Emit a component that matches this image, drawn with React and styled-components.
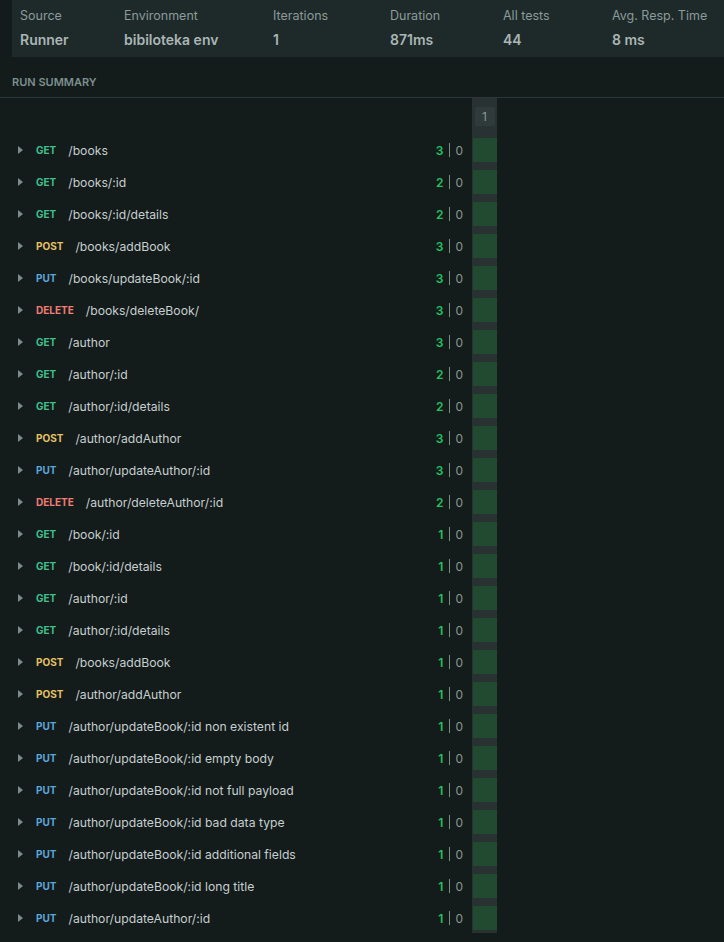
import React from "react";
import styled, { createGlobalStyle } from "styled-components";

const Global = createGlobalStyle`
  html, body { margin: 0; padding: 0; background: #131b1b; }
  body { font-family: Inter, "Noto Sans", sans-serif; -webkit-font-smoothing: antialiased; }
`;

const Page = styled.div`
  width: 724px;
  height: 942px;
  overflow: hidden;
  background: #131b1b;
`;

const Stats = styled.div`
  margin-left: 12px;
  height: 57px;
  background: #1e2929;
  display: grid;
  grid-template-columns: 104px 149px 117px 113px 109px 1fr;
  padding-left: 8px;
  box-sizing: border-box;
`;

const Stat = styled.div`
  display: flex;
  flex-direction: column;
  padding-top: 8px;
`;

const StatLabel = styled.div`
  font-size: 12.5px;
  color: #8b9b9a;
  line-height: 16px;
`;

const StatValue = styled.div`
  font-size: 14px;
  font-weight: 600;
  color: #aab6b5;
  line-height: 18px;
  margin-top: 7px;
`;

const SectionTitle = styled.div`
  padding: 18px 12px 0;
  height: 41px;
  box-sizing: border-box;
  font-size: 11px;
  font-weight: 600;
  color: #7d8f8e;
  border-bottom: 1px solid #2a3737;
  line-height: 14px;
`;

const Summary = styled.div`
  display: flex;
  align-items: flex-start;
`;

const List = styled.div`
  width: 472px;
  padding-top: 36px;
`;

const Row = styled.div`
  height: 32px;
  display: flex;
  align-items: center;
  padding-left: 18px;
  padding-right: 9px;
`;

const Caret = styled.span`
  width: 0;
  height: 0;
  border-top: 4px solid transparent;
  border-bottom: 4px solid transparent;
  border-left: 5px solid #7c8b8b;
  margin-right: 13px;
`;

const methodColors = {
  GET: "#3fc08e",
  POST: "#e6c264",
  PUT: "#5ca7dd",
  DELETE: "#f07d76",
};

const Method = styled.span`
  font-size: 10px;
  font-weight: 700;
  color: ${(p) => methodColors[p.$m]};
  margin-right: 12px;
`;

const Path = styled.span`
  font-size: 12.2px;
  color: #c6cfcf;
  flex: 1;
  white-space: nowrap;
`;

const Counts = styled.span`
  display: flex;
  align-items: center;
  font-size: 12px;
`;

const Pass = styled.span`
  color: #22c35f;
  font-weight: 600;
`;

const Sep = styled.span`
  width: 1px;
  height: 14px;
  background: #7d8a8a;
  margin: 0 5px 0 6px;
`;

const Fail = styled.span`
  color: #8c9999;
`;

const Column = styled.div`
  width: 25px;
  background: #293232;
  padding-bottom: 3px;
  display: flex;
  flex-direction: column;
  gap: 8px;
`;

const ColHead = styled.div`
  height: 32px;
  display: flex;
  justify-content: center;
  padding-top: 9px;
  box-sizing: border-box;
`;

const ColBadge = styled.div`
  width: 20px;
  height: 19px;
  border-radius: 2px;
  background: #2f3a3a;
  color: #8a9898;
  font-size: 12px;
  display: flex;
  align-items: center;
  justify-content: center;
`;

const Cell = styled.div`
  height: 24px;
  margin-left: 1px;
  background: #214a30;
`;

const stats = [
  ["Source", "Runner"],
  ["Environment", "bibiloteka env"],
  ["Iterations", "1"],
  ["Duration", "871ms"],
  ["All tests", "44"],
  ["Avg. Resp. Time", "8 ms"],
];

const rows = [
  ["GET", "/books", 3],
  ["GET", "/books/:id", 2],
  ["GET", "/books/:id/details", 2],
  ["POST", "/books/addBook", 3],
  ["PUT", "/books/updateBook/:id", 3],
  ["DELETE", "/books/deleteBook/", 3],
  ["GET", "/author", 3],
  ["GET", "/author/:id", 2],
  ["GET", "/author/:id/details", 2],
  ["POST", "/author/addAuthor", 3],
  ["PUT", "/author/updateAuthor/:id", 3],
  ["DELETE", "/author/deleteAuthor/:id", 2],
  ["GET", "/book/:id", 1],
  ["GET", "/book/:id/details", 1],
  ["GET", "/author/:id", 1],
  ["GET", "/author/:id/details", 1],
  ["POST", "/books/addBook", 1],
  ["POST", "/author/addAuthor", 1],
  ["PUT", "/author/updateBook/:id non existent id", 1],
  ["PUT", "/author/updateBook/:id empty body", 1],
  ["PUT", "/author/updateBook/:id not full payload", 1],
  ["PUT", "/author/updateBook/:id bad data type", 1],
  ["PUT", "/author/updateBook/:id additional fields", 1],
  ["PUT", "/author/updateBook/:id long title", 1],
  ["PUT", "/author/updateAuthor/:id", 1],
];

export default function App() {
  return (
    <Page>
      <Global />
      <Stats>
        {stats.map(([l, v]) => (
          <Stat key={l}>
            <StatLabel>{l}</StatLabel>
            <StatValue>{v}</StatValue>
          </Stat>
        ))}
      </Stats>
      <SectionTitle>RUN SUMMARY</SectionTitle>
      <Summary>
        <List>
          {rows.map(([m, p, n], i) => (
            <Row key={i}>
              <Caret />
              <Method $m={m}>{m}</Method>
              <Path>{p}</Path>
              <Counts>
                <Pass>{n}</Pass>
                <Sep />
                <Fail>0</Fail>
              </Counts>
            </Row>
          ))}
        </List>
        <Column>
          <ColHead>
            <ColBadge>1</ColBadge>
          </ColHead>
          {rows.map((_, i) => (
            <Cell key={i} />
          ))}
        </Column>
      </Summary>
    </Page>
  );
}
